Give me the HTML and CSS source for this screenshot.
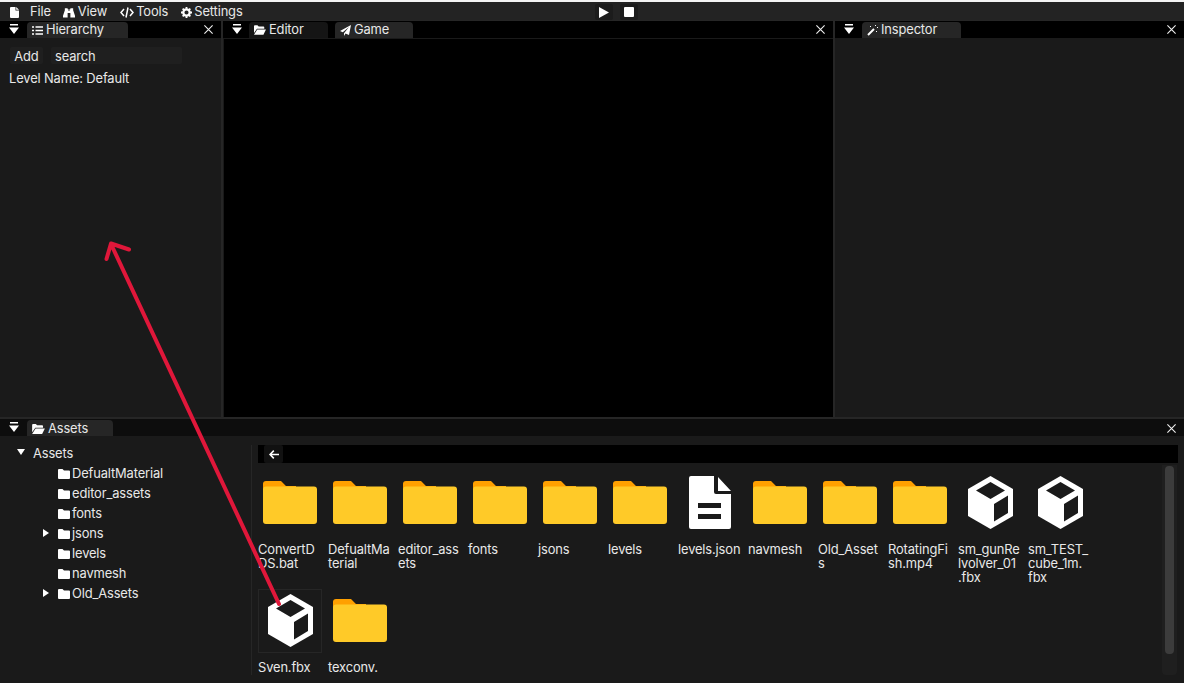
FILE: index.html
```html
<!DOCTYPE html>
<html lang="en">
<head>
<meta charset="UTF-8">
<title>Editor</title>
<link rel="stylesheet" href="styles.css">
</head>
<body>

<svg class="defs" width="0" height="0">
    <symbol id="folder-big" viewBox="0 0 64 64">
        <path fill="#ffa000" d="M5 13a3 3 0 0 1 3-3h15l5 5h10v12H5z"/>
        <path fill="#ffca28" d="M8 15.500h48a3 3 0 0 1 3 3V50a3 3 0 0 1-3 3H8a3 3 0 0 1-3-3V18.500a3 3 0 0 1 3-3z"/>
    </symbol>
    <symbol id="cube" viewBox="0 0 64 64">
        <path fill="#fff" d="M32.500 5 55 18v27L32.500 58 10 45V18z"/>
        <path fill="#1a1a1a" d="M32.500 11 47 19.500 32.500 28 18 19.500zM36 33l14-8.500v17.500L36 50.500z"/>
    </symbol>
    <symbol id="file" viewBox="0 0 64 64">
        <path fill="#fff" d="M13 5h23v16a2 2 0 0 0 2 2h15v33a2 2 0 0 1-2 2H13a2 2 0 0 1-2-2V7a2 2 0 0 1 2-2zM40 6l13 14H40z"/>
        <path fill="#1a1a1a" d="M20 32h23v5H20zM20 43h23v5H20z"/>
    </symbol>
    <symbol id="folder-small" viewBox="0 0 12 10">
        <path fill="#fff" d="M1 0h3.500l1.500 1.500h5a1 1 0 0 1 1 1V9a1 1 0 0 1-1 1H1a1 1 0 0 1-1-1V1a1 1 0 0 1 1-1z"/>
    </symbol>
    <symbol id="folder-open" viewBox="0 0 14 11">
        <path fill="#fff" d="M0 1a1 1 0 0 1 1-1h3l1.500 1.500H11a1 1 0 0 1 1 1V4H3.500L0 9z"/>
        <path fill="#fff" d="M3.800 5H14l-3 6H0z"/>
    </symbol>
    <symbol id="dock-menu" viewBox="0 0 10 10">
        <path fill="#fff" d="M1 0h8v1.500H1zM0 3.500h10L5 10z"/>
    </symbol>
    <symbol id="close" viewBox="0 0 9 9">
        <path fill="none" stroke="#f0f0f0" stroke-width="1.100" d="M.4.400l8.200 8.200M8.600.400l-8.200 8.200"/>
    </symbol>
</svg>

<div class="app">
    <div class="menubar">
        <div class="menu-items">
            <span class="menu-item">
                <svg class="menu-icon" width="9" height="11" viewBox="0 0 9 11"><path fill="#fff" d="M1 0h4.500v3.500H9V10a1 1 0 0 1-1 1H1a1 1 0 0 1-1-1V1a1 1 0 0 1 1-1zM6.200 0 9 2.800H6.200z"/></svg>
                <span class="menu-label file-label">File</span>
            </span>
            <span class="menu-item">
                <svg class="menu-icon" width="12" height="11" viewBox="0 0 13 11"><path fill="#fff" d="M2 1h3v1h1v2h1V2h1V1h3v2l2 6v2H8V6H5v5H0V9l2-6z"/></svg>
                <span class="menu-label">View</span>
            </span>
            <span class="menu-item">
                <svg class="menu-icon" width="14" height="11" viewBox="0 0 14 11"><path fill="none" stroke="#fff" stroke-width="1.500" d="M4 2 1 5.500 4 9M10 2l3 3.500L10 9M8 .500 6 10.500"/></svg>
                <span class="menu-label">Tools</span>
            </span>
            <span class="menu-item">
                <svg class="menu-icon" width="11" height="11" viewBox="0 0 12 12"><circle cx="6" cy="6" r="3.500" fill="none" stroke="#fff" stroke-width="2.500"/><path fill="none" stroke="#fff" stroke-width="2" d="M6 0v2M6 10v2M0 6h2M10 6h2M1.800 1.800l1.400 1.400M8.800 8.800l1.400 1.400M1.800 10.200l1.400-1.400M8.800 3.200l1.400-1.400"/></svg>
                <span class="menu-label">Settings</span>
            </span>
        </div>
        <div class="play-controls">
            <span class="play-btn"><svg width="10" height="11" viewBox="0 0 10 11"><path fill="#fff" d="M0 0l10 5.500L0 11z"/></svg></span>
            <span class="play-btn"><svg width="10" height="10" viewBox="0 0 10 10"><rect width="10" height="10" rx="1" fill="#fff"/></svg></span>
        </div>
    </div>

    <div class="dock-top">
        <section class="panel">
            <div class="tabbar">
                <svg class="dock-menu"><use href="#dock-menu"/></svg>
                <span class="tab active hierarchy-tab">
                    <svg class="tab-icon" width="11" height="9" viewBox="0 0 11 9"><path fill="none" stroke="#fff" stroke-width="1.300" d="M0 1h2M3.500 1H11M0 4.500h2M3.500 4.500H11M0 8h2M3.500 8H11"/></svg>
                    Hierarchy
                </span>
                <svg class="close"><use href="#close"/></svg>
            </div>
            <div class="panel-body hierarchy">
                <div class="hierarchy-tools">
                    <span class="add-btn">Add</span>
                    <span class="search-box">search</span>
                </div>
                <p class="level-name">Level Name: Default</p>
            </div>
        </section>

        <section class="panel">
            <div class="tabbar">
                <svg class="dock-menu"><use href="#dock-menu"/></svg>
                <span class="tab editor-tab">
                    <svg class="tab-icon" width="12" height="10"><use href="#folder-open"/></svg>
                    Editor
                </span>
                <span class="tab active game-tab">
                    <svg class="tab-icon" width="11" height="11" viewBox="0 0 11 11"><path fill="#fff" d="M11 0 9 10 5.500 8.500 4 11V8.200L9 2 2.800 7.200 0 6z"/></svg>
                    Game
                </span>
                <svg class="close"><use href="#close"/></svg>
            </div>
            <div class="panel-body viewport"></div>
        </section>

        <section class="panel">
            <div class="tabbar">
                <svg class="dock-menu"><use href="#dock-menu"/></svg>
                <span class="tab active inspector-tab">
                    <svg class="tab-icon" width="11" height="11" viewBox="0 0 11 11"><path fill="none" stroke="#fff" stroke-width="2" d="M1 10 7 4"/><path fill="#fff" d="M8 0h1v1H8zM10 2h1v1h-1zM3 1h1v1H3zM9 6h1v1H9z"/></svg>
                    Inspector
                </span>
                <svg class="close"><use href="#close"/></svg>
            </div>
            <div class="panel-body"></div>
        </section>
    </div>

    <section class="panel assets-panel">
        <div class="tabbar assets-bar">
            <svg class="dock-menu"><use href="#dock-menu"/></svg>
            <span class="tab active assets-tab">
                <svg class="tab-icon" width="13" height="10"><use href="#folder-open"/></svg>
                Assets
            </span>
            <svg class="close"><use href="#close"/></svg>
        </div>
        <div class="panel-body assets-body">
            <ul class="tree">
                <li class="tree-root"><span class="arrow-down"></span>Assets</li>
                <li class="tree-row"><svg class="tree-folder"><use href="#folder-small"/></svg>DefualtMaterial</li>
                <li class="tree-row"><svg class="tree-folder"><use href="#folder-small"/></svg>editor_assets</li>
                <li class="tree-row"><svg class="tree-folder"><use href="#folder-small"/></svg>fonts</li>
                <li class="tree-row"><span class="arrow-right"></span><svg class="tree-folder"><use href="#folder-small"/></svg>jsons</li>
                <li class="tree-row"><svg class="tree-folder"><use href="#folder-small"/></svg>levels</li>
                <li class="tree-row"><svg class="tree-folder"><use href="#folder-small"/></svg>navmesh</li>
                <li class="tree-row"><span class="arrow-right"></span><svg class="tree-folder"><use href="#folder-small"/></svg>Old_Assets</li>
            </ul>
            <div class="browser">
                <div class="pathbar">
                    <span class="back-btn"><svg width="10" height="9" viewBox="0 0 10 9"><path fill="none" stroke="#fff" stroke-width="1.600" d="M4.800.600 1 4.500l3.800 3.900M1 4.500h9"/></svg></span>
                </div>
                <div class="browser-main">
                    <div class="asset-grid">
                        <div class="asset"><div class="thumb"><svg><use href="#folder-big"/></svg></div><div class="asset-name">ConvertD<br>DS.bat</div></div>
                        <div class="asset"><div class="thumb"><svg><use href="#folder-big"/></svg></div><div class="asset-name">DefualtMa<br>terial</div></div>
                        <div class="asset"><div class="thumb"><svg><use href="#folder-big"/></svg></div><div class="asset-name">editor_ass<br>ets</div></div>
                        <div class="asset"><div class="thumb"><svg><use href="#folder-big"/></svg></div><div class="asset-name">fonts</div></div>
                        <div class="asset"><div class="thumb"><svg><use href="#folder-big"/></svg></div><div class="asset-name">jsons</div></div>
                        <div class="asset"><div class="thumb"><svg><use href="#folder-big"/></svg></div><div class="asset-name">levels</div></div>
                        <div class="asset"><div class="thumb"><svg><use href="#file"/></svg></div><div class="asset-name">levels.json</div></div>
                        <div class="asset"><div class="thumb"><svg><use href="#folder-big"/></svg></div><div class="asset-name">navmesh</div></div>
                        <div class="asset"><div class="thumb"><svg><use href="#folder-big"/></svg></div><div class="asset-name">Old_Asset<br>s</div></div>
                        <div class="asset"><div class="thumb"><svg><use href="#folder-big"/></svg></div><div class="asset-name">RotatingFi<br>sh.mp4</div></div>
                        <div class="asset"><div class="thumb"><svg><use href="#cube"/></svg></div><div class="asset-name">sm_gunRe<br>lvolver_01<br>.fbx</div></div>
                        <div class="asset"><div class="thumb"><svg><use href="#cube"/></svg></div><div class="asset-name">sm_TEST_<br>cube_1m.<br>fbx</div></div>
                        <div class="asset"><div class="thumb selected"><svg><use href="#cube"/></svg></div><div class="asset-name">Sven.fbx</div></div>
                        <div class="asset"><div class="thumb"><svg><use href="#folder-big"/></svg></div><div class="asset-name">texconv.</div></div>
                    </div>
                    <div class="scrollbar"><div class="scroll-thumb"></div></div>
                </div>
            </div>
        </div>
    </section>
</div>

<!-- annotation drawn over the screenshot -->
<svg class="annotation" width="1184" height="683" viewBox="0 0 1184 683">
    <path fill="none" stroke="#e0173a" stroke-width="4" stroke-linecap="round" stroke-linejoin="round" d="M279 604 111 244M106.500 259 111 243.500 129 249.500"/>
</svg>

</body>
</html>
```

FILE: styles.css
```css
html, body {
    margin: 0;
    height: 100%;
    overflow: hidden;
}
body {
    background-color: #262626;
    color: #e8e8e8;
    font-family: Inter, "Liberation Sans", sans-serif;
    font-size: 12.9px;
    letter-spacing: -0.13px;
    line-height: 14px;
}
.defs {
    position: absolute;
}
.app {
    display: flex;
    flex-direction: column;
    height: 683px;
    border-top: 2px solid #f4f4f4;
    box-sizing: border-box;
}
.menubar {
    display: flex;
    align-items: center;
    height: 18px;
    padding-top: 2px;
    box-sizing: border-box;
    flex: none;
    background-color: #232323;
}
.menu-items {
    display: flex;
    align-items: center;
    padding-left: 10px;
    width: 595px;
    box-sizing: border-box;
}
.menu-item {
    display: flex;
    align-items: center;
    gap: 2.500px;
    margin-right: 12.500px;
}
.menu-icon {
    flex: none;
}
.file-label {
    margin-left: 8.500px;
}
.play-controls {
    display: flex;
    gap: 7px;
}
.play-btn {
    display: flex;
    align-items: center;
    justify-content: center;
    width: 18px;
    height: 16px;
    background-color: #1c1c1c;
    border-radius: 2px;
}
.dock-top {
    display: grid;
    grid-template-columns: 221px 610px 1fr;
    column-gap: 2px;
    height: 397px;
    flex: none;
    padding-top: 1px;
    box-sizing: border-box;
}
.panel {
    display: flex;
    flex-direction: column;
    min-width: 0;
    background-color: #1a1a1a;
}
.tabbar {
    display: flex;
    align-items: flex-end;
    height: 17px;
    flex: none;
    background-color: #000;
    position: relative;
}
.assets-bar {
    background-color: #0d0d0d;
}
.assets-bar .close {
    top: 5px;
}
.dock-menu {
    width: 10px;
    height: 10px;
    margin: 0 8px 4px 9px;
    flex: none;
}
.tab {
    display: flex;
    align-items: center;
    gap: 3px;
    height: 16px;
    padding: 0 5px;
    margin-right: 7px;
    box-sizing: border-box;
    background-color: #151515;
    border-radius: 4px 4px 0 0;
}
.tab.active {
    background-color: #262626;
}
.tab-icon {
    flex: none;
}
.hierarchy-tab {
    width: 101px;
}
.editor-tab {
    width: 79px;
    margin-left: -1px;
}
.game-tab {
    width: 78px;
}
.inspector-tab {
    width: 99px;
}
.assets-tab {
    width: 86px;
    padding-top: 2px;
}
.close {
    position: absolute;
    right: 8px;
    top: 4px;
    width: 9px;
    height: 9px;
}
.panel-body {
    flex: 1;
    min-height: 0;
}
.viewport {
    background-color: #000;
    margin: 1px 0 0 1px;
}
.hierarchy {
    padding: 9px;
}
.hierarchy-tools {
    display: flex;
    gap: 8px;
    margin-left: 1px;
}
.add-btn {
    width: 33px;
    height: 17px;
    line-height: 19px;
    text-align: center;
    background-color: #1f1f1f;
    border-radius: 2px;
}
.search-box {
    width: 127px;
    height: 17px;
    line-height: 19px;
    padding-left: 4px;
    background-color: #1f1f1f;
    border-radius: 2px;
}
.level-name {
    margin: 8px 0 0 0;
}
.assets-panel {
    flex: 1;
    min-height: 0;
    margin-top: 2px;
}
.assets-body {
    display: flex;
}
.tree {
    width: 252px;
    height: 230px;
    margin: 9px 0 0 0;
    padding: 0;
    list-style: none;
    flex: none;
    border-right: 1px solid #262626;
    box-sizing: border-box;
}
.tree-root {
    position: relative;
    height: 18px;
    padding-left: 33px;
    line-height: 18px;
}
.tree-row {
    position: relative;
    display: flex;
    align-items: center;
    height: 20px;
    padding: 2px 0 0 58px;
    box-sizing: border-box;
}
.tree-folder {
    width: 12px;
    height: 10px;
    margin-right: 2px;
    flex: none;
}
.arrow-down {
    position: absolute;
    left: 17px;
    top: 4px;
    border-style: solid;
    border-width: 6px 4px 0 4px;
    border-color: #fff transparent transparent transparent;
}
.arrow-right {
    position: absolute;
    left: 43px;
    top: 6px;
    border-style: solid;
    border-width: 4px 0 4px 6px;
    border-color: transparent transparent transparent #fff;
}
.browser {
    flex: 1;
    min-width: 0;
    padding: 9px 6px 0 6px;
}
.pathbar {
    height: 18px;
    background-color: #000;
    padding-left: 6px;
}
.back-btn {
    display: flex;
    align-items: center;
    justify-content: center;
    width: 19px;
    height: 18px;
    background-color: #111;
    border-radius: 2px;
}
.browser-main {
    display: flex;
    height: 210px;
    margin-top: 2px;
}
.asset-grid {
    flex: 1;
    display: flex;
    flex-wrap: wrap;
    align-content: flex-start;
    padding-top: 6px;
}
.asset {
    width: 70px;
    height: 118px;
}
.asset-name {
    margin-top: 8px;
    white-space: nowrap;
}
.thumb {
    width: 64px;
    height: 64px;
    box-sizing: border-box;
}
.thumb svg {
    width: 64px;
    height: 64px;
    display: block;
}
.thumb.selected {
    outline: 1px solid #262626;
    outline-offset: -1px;
}
.scrollbar {
    width: 15px;
    height: 210px;
    margin-right: 1px;
    background-color: #1f1f1f;
    padding: 1px 3px 0 3px;
    box-sizing: border-box;
    flex: none;
    border-radius: 0 0 4px 4px;
}
.scroll-thumb {
    height: 188px;
    background-color: #3c3c3c;
    border-radius: 4px;
}
.annotation {
    position: absolute;
    left: 0;
    top: 0;
    pointer-events: none;
}
```
